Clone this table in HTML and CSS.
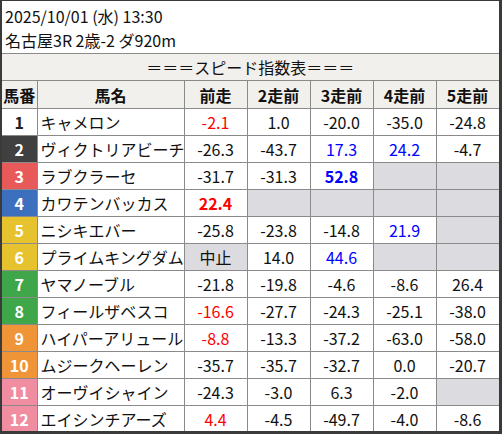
FILE: index.html
```html
<!DOCTYPE html>
<html lang="ja">
<head>
<meta charset="utf-8">
<link rel="stylesheet" href="styles.css">
</head>
<body>
<div class="frame">
  <div class="info">
    <div>2025/10/01 (水) 13:30</div>
    <div>名古屋3R 2歳-2 ダ920m</div>
  </div>
  <table>
    <colgroup>
      <col class="c-num"><col class="c-name"><col class="c-v"><col class="c-v"><col class="c-v"><col class="c-v"><col class="c-v">
    </colgroup>
    <tr class="title"><td colspan="7">＝＝＝スピード指数表＝＝＝</td></tr>
    <tr class="head"><th>馬番</th><th>馬名</th><th>前走</th><th>2走前</th><th>3走前</th><th>4走前</th><th>5走前</th></tr>
    <tr><td class="num w1">1</td><td class="name">キャメロン</td><td class="red">-2.1</td><td>1.0</td><td>-20.0</td><td>-35.0</td><td>-24.8</td></tr>
    <tr><td class="num w2">2</td><td class="name">ヴィクトリアビーチ</td><td>-26.3</td><td>-43.7</td><td class="blue">17.3</td><td class="blue">24.2</td><td>-4.7</td></tr>
    <tr><td class="num w3">3</td><td class="name">ラブクラーセ</td><td>-31.7</td><td>-31.3</td><td class="blue b">52.8</td><td class="empty"></td><td class="empty"></td></tr>
    <tr><td class="num w4">4</td><td class="name">カワテンバッカス</td><td class="red b">22.4</td><td class="empty"></td><td class="empty"></td><td class="empty"></td><td class="empty"></td></tr>
    <tr><td class="num w5">5</td><td class="name">ニシキエバー</td><td>-25.8</td><td>-23.8</td><td>-14.8</td><td class="blue">21.9</td><td class="empty"></td></tr>
    <tr><td class="num w5">6</td><td class="name">プライムキングダム</td><td class="empty">中止</td><td>14.0</td><td class="blue">44.6</td><td class="empty"></td><td class="empty"></td></tr>
    <tr><td class="num w7">7</td><td class="name">ヤマノーブル</td><td>-21.8</td><td>-19.8</td><td>-4.6</td><td>-8.6</td><td>26.4</td></tr>
    <tr><td class="num w7">8</td><td class="name">フィールザベスコ</td><td class="red">-16.6</td><td>-27.7</td><td>-24.3</td><td>-25.1</td><td>-38.0</td></tr>
    <tr><td class="num w9">9</td><td class="name">ハイパーアリュール</td><td class="red">-8.8</td><td>-13.3</td><td>-37.2</td><td>-63.0</td><td>-58.0</td></tr>
    <tr><td class="num w9">10</td><td class="name">ムジークヘーレン</td><td>-35.7</td><td>-35.7</td><td>-32.7</td><td>0.0</td><td>-20.7</td></tr>
    <tr><td class="num w11">11</td><td class="name">オーヴイシャイン</td><td>-24.3</td><td>-3.0</td><td>6.3</td><td>-2.0</td><td class="empty"></td></tr>
    <tr><td class="num w11">12</td><td class="name">エイシンチアーズ</td><td class="red">4.4</td><td>-4.5</td><td>-49.7</td><td>-4.0</td><td>-8.6</td></tr>
  </table>
</div>
</body>
</html>
```

FILE: styles.css
```css
html, body {
  margin: 0;
  padding: 0;
  background: #ffffff;
}

body {
  font-family: "Noto Sans CJK JP", "Noto Sans", sans-serif;
  font-size: 16px;
  color: #111111;
}

.frame {
  width: 502px;
  height: 434px;
  box-sizing: border-box;
  border-style: solid;
  border-color: #3a3a3a;
  border-width: 1px 3px 3px 2px;
  background: #ffffff;
  overflow: hidden;
}

.info {
  height: 53px;
  box-sizing: border-box;
  padding: 3px 0 0 3px;
  line-height: 24px;
  border-bottom: 1px solid #8a8a8a;
}

table {
  width: 497px;
  border-collapse: collapse;
  table-layout: fixed;
}

.c-num { width: 35px; }
.c-name { width: 147px; }
.c-v { width: 63px; }

td, th {
  border: 1px solid #8a8a8a;
  padding: 0;
  height: 26px;
  line-height: 24px;
  text-align: center;
  white-space: nowrap;
  overflow: hidden;
}

tr:first-child td {
  border-top: none;
}

td:first-child, th:first-child {
  border-left: none;
}

.title td {
  background: #f2f0ec;
  height: 26px;
}

.head th {
  background: #f2f0ec;
  font-weight: bold;
  height: 27px;
}

.name {
  text-align: left;
  padding-left: 3px;
}

.num {
  font-weight: bold;
  color: #ffffff;
}

.w1 { background: #ffffff; color: #222222; }
.w2 { background: #404040; }
.w3 { background: #e85a5a; }
.w4 { background: #3d6fbf; }
.w5 { background: #e6c22e; }
.w7 { background: #3fa74a; }
.w9 { background: #ef9538; }
.w11 { background: #f08da0; }

.empty { background: #dcdce0; }

.red { color: #ff0000; }
.blue { color: #0000ff; }
.b { font-weight: bold; }
```
